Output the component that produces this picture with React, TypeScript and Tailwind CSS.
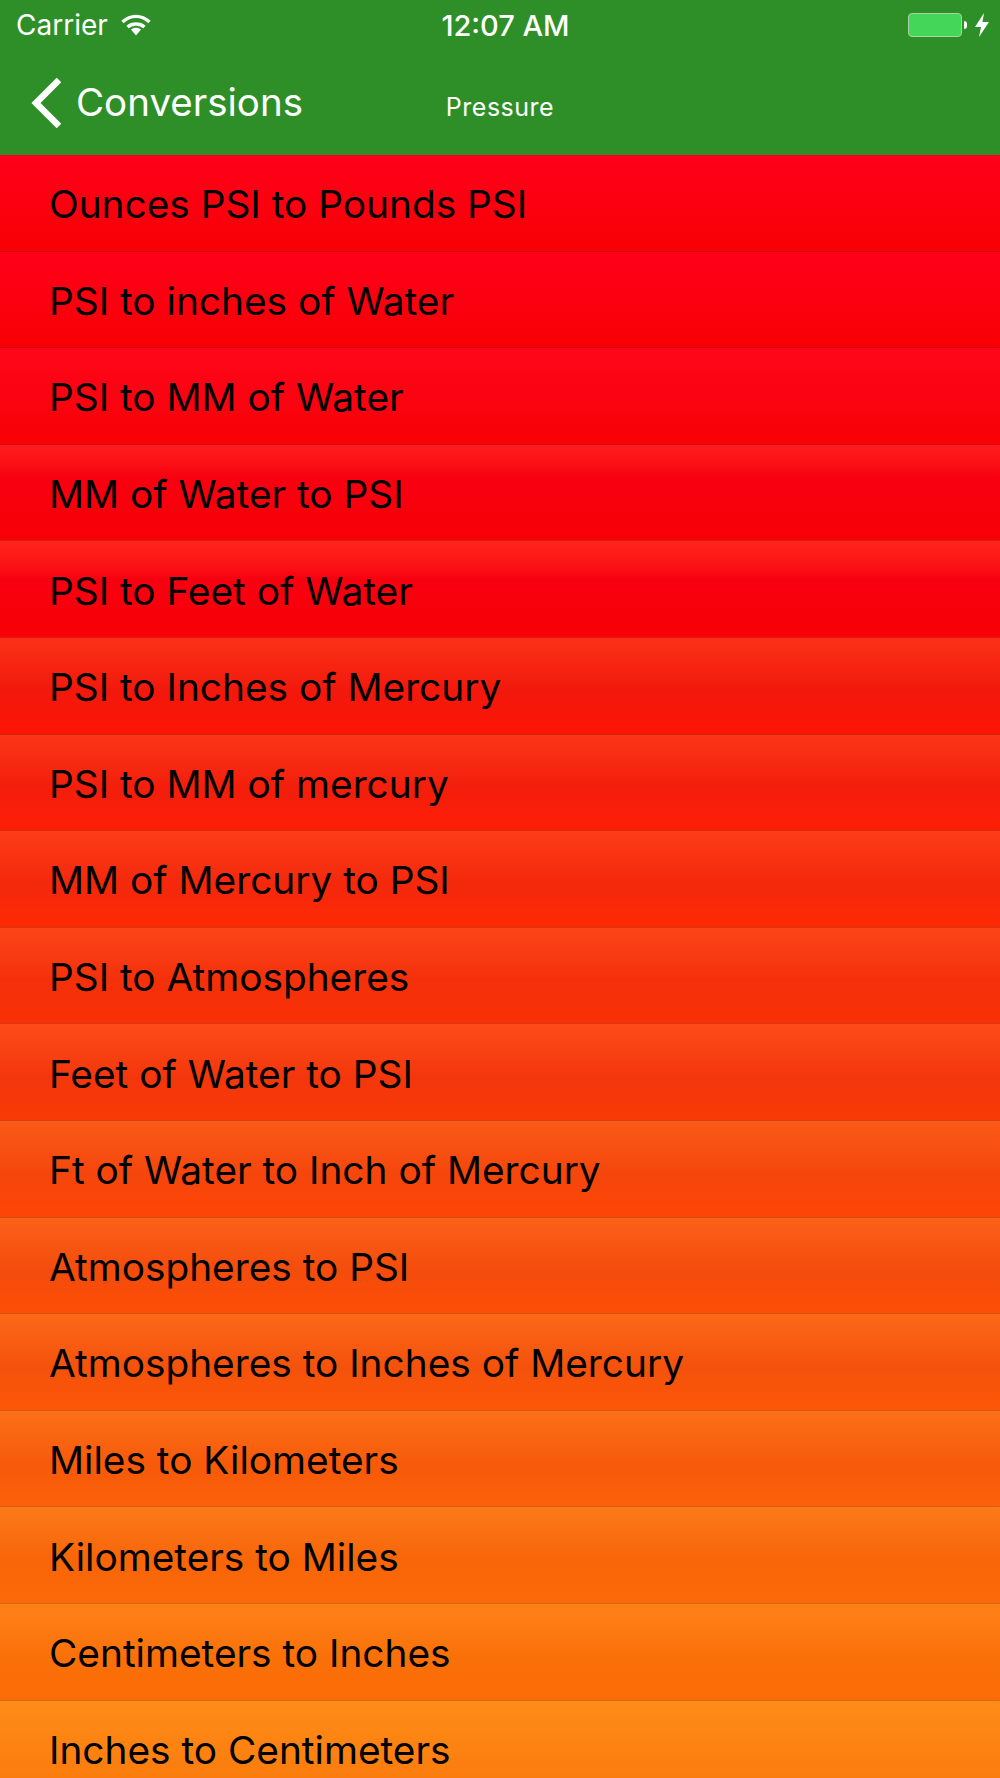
import React from 'react';

const rows = [
  { label: 'Ounces PSI to Pounds PSI', bg: 'bg-gradient-to-b from-[#ff0018] to-[#f80004]' },
  { label: 'PSI to inches of Water', bg: 'bg-gradient-to-b from-[#ff0018] to-[#f80004]' },
  { label: 'PSI to MM of Water', bg: 'bg-gradient-to-b from-[#ff061a] to-[#f80004]' },
  { label: 'MM of Water to PSI', bg: 'bg-gradient-to-b from-[#ff1c1c] via-[#f80010] via-35% to-[#f80005]' },
  { label: 'PSI to Feet of Water', bg: 'bg-gradient-to-b from-[#ff241c] via-[#f80010] via-40% to-[#f80005]' },
  { label: 'PSI to Inches of Mercury', bg: 'bg-gradient-to-b from-[#fb3016] via-[#f2180c] via-55% to-[#fe1505]' },
  { label: 'PSI to MM of mercury', bg: 'bg-gradient-to-b from-[#fc3416] via-[#f31e0c] via-55% to-[#ff1e05]' },
  { label: 'MM of Mercury to PSI', bg: 'bg-gradient-to-b from-[#fc3c18] via-[#f4280c] via-55% to-[#ff2a04]' },
  { label: 'PSI to Atmospheres', bg: 'bg-gradient-to-b from-[#fc4418] via-[#f4300a] via-55% to-[#fa3005]' },
  { label: 'Feet of Water to PSI', bg: 'bg-gradient-to-b from-[#fc4c18] via-[#f4360c] via-55% to-[#f83a06]' },
  { label: 'Ft of Water to Inch of Mercury', bg: 'bg-gradient-to-b from-[#fb5a18] via-[#f5460c] via-55% to-[#ff4505]' },
  { label: 'Atmospheres to PSI', bg: 'bg-gradient-to-b from-[#fb6018] via-[#f44c0c] via-55% to-[#fd4e06]' },
  { label: 'Atmospheres to Inches of Mercury', bg: 'bg-gradient-to-b from-[#fc6818] via-[#f4520c] via-55% to-[#fd5606]' },
  { label: 'Miles to Kilometers', bg: 'bg-gradient-to-b from-[#fc7018] via-[#f65a0a] via-55% to-[#fc6008]' },
  { label: 'Kilometers to Miles', bg: 'bg-gradient-to-b from-[#fb7a18] via-[#f76508] via-55% to-[#fc6a08]' },
  { label: 'Centimeters to Inches', bg: 'bg-gradient-to-b from-[#fe8218] via-[#fa7008] via-55% to-[#fb6c06]' },
  { label: 'Inches to Centimeters', bg: 'bg-gradient-to-b from-[#ff8c18] to-[#f9780a]' },
];

export default function App() {
  return (
    <div className="h-[1778px] w-[1000px] overflow-hidden bg-[#f97a0a] font-['Inter',sans-serif]">
      <header className="h-[155px] bg-[#2e8f28] text-white">
        {/* status bar */}
        <div className="grid h-[50px] grid-cols-3 items-center pl-4 pr-[11px]">
          <div className="flex items-center gap-[13px]">
            <span className="text-[28px] leading-none">Carrier</span>
            <svg width="30" height="22" viewBox="0 0 30 22" fill="none" stroke="white" strokeWidth="3.4">
              <path d="M1.5 8C9.5 0.5 20.5 0.5 28.5 8" />
              <path d="M6.5 13C11 9 19 9 23.5 13" />
              <path d="M10 15.5L15 21.5L20 15.5C17 13 13 13 10 15.5Z" fill="white" stroke="none" />
            </svg>
          </div>
          <div className="pl-[6px] text-center text-[29px] font-medium leading-none">12:07 AM</div>
          <div className="flex items-center justify-end gap-[8px]">
            <div className="flex items-center gap-[2px]">
              <div className="h-[24px] w-[54px] rounded-[4px] border border-[#a9d3a5] bg-[#43d658]" />
              <div className="h-[8px] w-[3px] rounded-r-full bg-white" />
            </div>
            <svg width="14" height="24" viewBox="0 0 14 24" fill="white">
              <path d="M9 0L0 14H6L4 24L14 9H7.5L9 0Z" />
            </svg>
          </div>
        </div>
        {/* nav bar */}
        <div className="grid h-[105px] grid-cols-3 items-center">
          <div className="flex items-center gap-[15px] pl-[30px]">
            <svg width="31" height="50" viewBox="0 0 31 50" fill="none" stroke="white" strokeWidth="6.5">
              <path d="M29 2L6 25L29 48" />
            </svg>
            <span className="text-[38.5px] leading-none">Conversions</span>
          </div>
          <div className="pt-[9px] text-center text-[25px] leading-none tracking-[0.5px]">Pressure</div>
        </div>
      </header>
      <ul>
        {rows.map((row) => (
          <li
            key={row.label}
            className={`flex h-[96.6px] items-center border-b border-b-black/15 pl-[49px] pt-[3px] text-[38.8px] text-black ${row.bg}`}
          >
            {row.label}
          </li>
        ))}
      </ul>
    </div>
  );
}
